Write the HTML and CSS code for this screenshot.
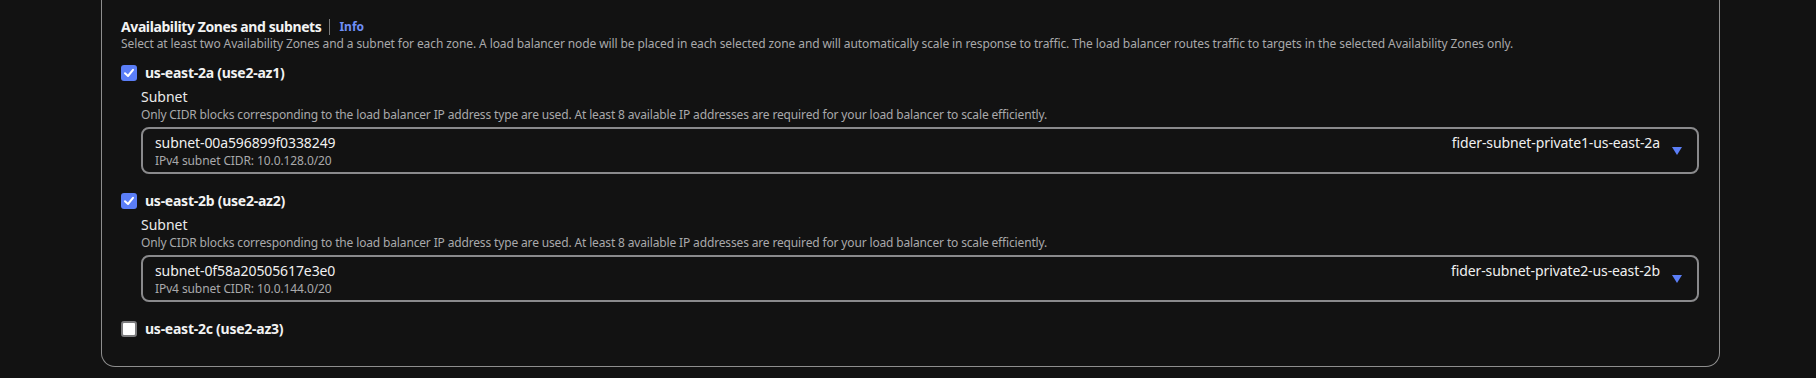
FILE: index.html
```html
<!DOCTYPE html>
<html lang="en">
<head>
<meta charset="utf-8">
<title>Availability Zones and subnets</title>
<link rel="stylesheet" href="styles.css">
</head>
<body>
<div class="card">
  <div class="header">
    <h2 class="title">Availability Zones and subnets</h2>
    <span class="sep"></span>
    <a class="info" href="#">Info</a>
  </div>
  <p class="desc">Select at least two Availability Zones and a subnet for each zone. A load balancer node will be placed in each selected zone and will automatically scale in response to traffic. The load balancer routes traffic to targets in the selected Availability Zones only.</p>

  <div class="zone">
    <label class="check-row">
      <span class="box checked"><svg viewBox="0 0 16 16" width="16" height="16"><polyline points="4,8.2 7,11 12,4.8" fill="none" stroke="#fff" stroke-width="2" stroke-linecap="round" stroke-linejoin="round"/></svg></span>
      <span class="check-label">us-east-2a (use2-az1)</span>
    </label>
    <div class="subnet">
      <div class="field-label">Subnet</div>
      <div class="field-desc">Only CIDR blocks corresponding to the load balancer IP address type are used. At least 8 available IP addresses are required for your load balancer to scale efficiently.</div>
      <div class="select">
        <div class="sel-main">
          <div class="sel-id">subnet-00a596899f0338249</div>
          <div class="sel-sub">IPv4 subnet CIDR: 10.0.128.0/20</div>
        </div>
        <div class="sel-name">fider-subnet-private1-us-east-2a</div>
        <svg class="caret" viewBox="0 0 10 8" width="10" height="8"><polygon points="0,0 10,0 5,8" fill="#5b7ef7"/></svg>
      </div>
    </div>
  </div>

  <div class="zone">
    <label class="check-row">
      <span class="box checked"><svg viewBox="0 0 16 16" width="16" height="16"><polyline points="4,8.2 7,11 12,4.8" fill="none" stroke="#fff" stroke-width="2" stroke-linecap="round" stroke-linejoin="round"/></svg></span>
      <span class="check-label">us-east-2b (use2-az2)</span>
    </label>
    <div class="subnet">
      <div class="field-label">Subnet</div>
      <div class="field-desc">Only CIDR blocks corresponding to the load balancer IP address type are used. At least 8 available IP addresses are required for your load balancer to scale efficiently.</div>
      <div class="select">
        <div class="sel-main">
          <div class="sel-id">subnet-0f58a20505617e3e0</div>
          <div class="sel-sub">IPv4 subnet CIDR: 10.0.144.0/20</div>
        </div>
        <div class="sel-name">fider-subnet-private2-us-east-2b</div>
        <svg class="caret" viewBox="0 0 10 8" width="10" height="8"><polygon points="0,0 10,0 5,8" fill="#5b7ef7"/></svg>
      </div>
    </div>
  </div>

  <div class="zone last">
    <label class="check-row">
      <span class="box"></span>
      <span class="check-label">us-east-2c (use2-az3)</span>
    </label>
  </div>
</div>
</body>
</html>
```
FILE: styles.css
```css
* { box-sizing: border-box; }
html, body { margin: 0; padding: 0; }
body {
  background: #121212;
  font-family: "Noto Sans", "Open Sans", sans-serif;
  color: #e6e6e6;
  width: 1816px;
  height: 378px;
  overflow: hidden;
}
.card {
  margin-left: 101px;
  width: 1619px;
  border: 1px solid #8e8e8e;
  border-top: none;
  border-radius: 0 0 14px 14px;
  padding: 17px 20px 27px 19px;
}
.header {
  display: flex;
  align-items: center;
  height: 18px;
  padding-top: 2px;
}
.title {
  margin: 0;
  font-size: 14px;
  line-height: 18px;
  font-weight: 700;
  color: #f2f3f3;
  letter-spacing: -0.4px;
}
.sep {
  width: 1px;
  height: 16px;
  background: #7a7a7a;
  margin: 0 9px 0 8px;
}
.info {
  font-size: 12px;
  font-weight: 700;
  line-height: 18px;
  color: #6f8ff7;
  text-decoration: none;
}
.desc {
  margin: 0;
  padding-top: 1px;
  font-size: 12px;
  line-height: 16px;
  color: #a9a9ab;
  letter-spacing: -0.1px;
}
.zone {
  margin-top: 11px;
}
.zone + .zone {
  margin-top: 17px;
}
.check-row {
  display: flex;
  align-items: center;
  height: 20px;
  gap: 8px;
}
.box {
  width: 16px;
  height: 16px;
  border-radius: 3px;
  border: 2px solid #7b7b7d;
  background: #ffffff;
  display: flex;
}
.box.checked {
  border: none;
  background: #5b7ef7;
}
.check-label {
  font-size: 14px;
  font-weight: 700;
  line-height: 20px;
  color: #f2f3f3;
  letter-spacing: -0.25px;
}
.subnet {
  margin-left: 20px;
  margin-top: 4px;
}
.field-label {
  font-size: 14px;
  line-height: 20px;
  color: #eaeaea;
}
.field-desc {
  font-size: 12px;
  line-height: 16px;
  color: #a9a9ab;
  letter-spacing: -0.15px;
}
.select {
  margin-top: 4px;
  height: 47px;
  border: 2px solid #8a8a8c;
  border-radius: 8px;
  padding: 4px 15px 0 12px;
  display: flex;
  align-items: flex-start;
}
.sel-main {
  flex: 1;
}
.sel-id {
  font-size: 14px;
  line-height: 20px;
  color: #f0f0f0;
  letter-spacing: -0.1px;
}
.sel-sub {
  font-size: 12px;
  line-height: 16px;
  color: #a9a9ab;
  letter-spacing: -0.1px;
}
.sel-name {
  font-size: 14px;
  line-height: 20px;
  color: #f0f0f0;
  letter-spacing: -0.1px;
}
.caret {
  margin-left: 12px;
  margin-top: 14px;
  flex: none;
}
```
